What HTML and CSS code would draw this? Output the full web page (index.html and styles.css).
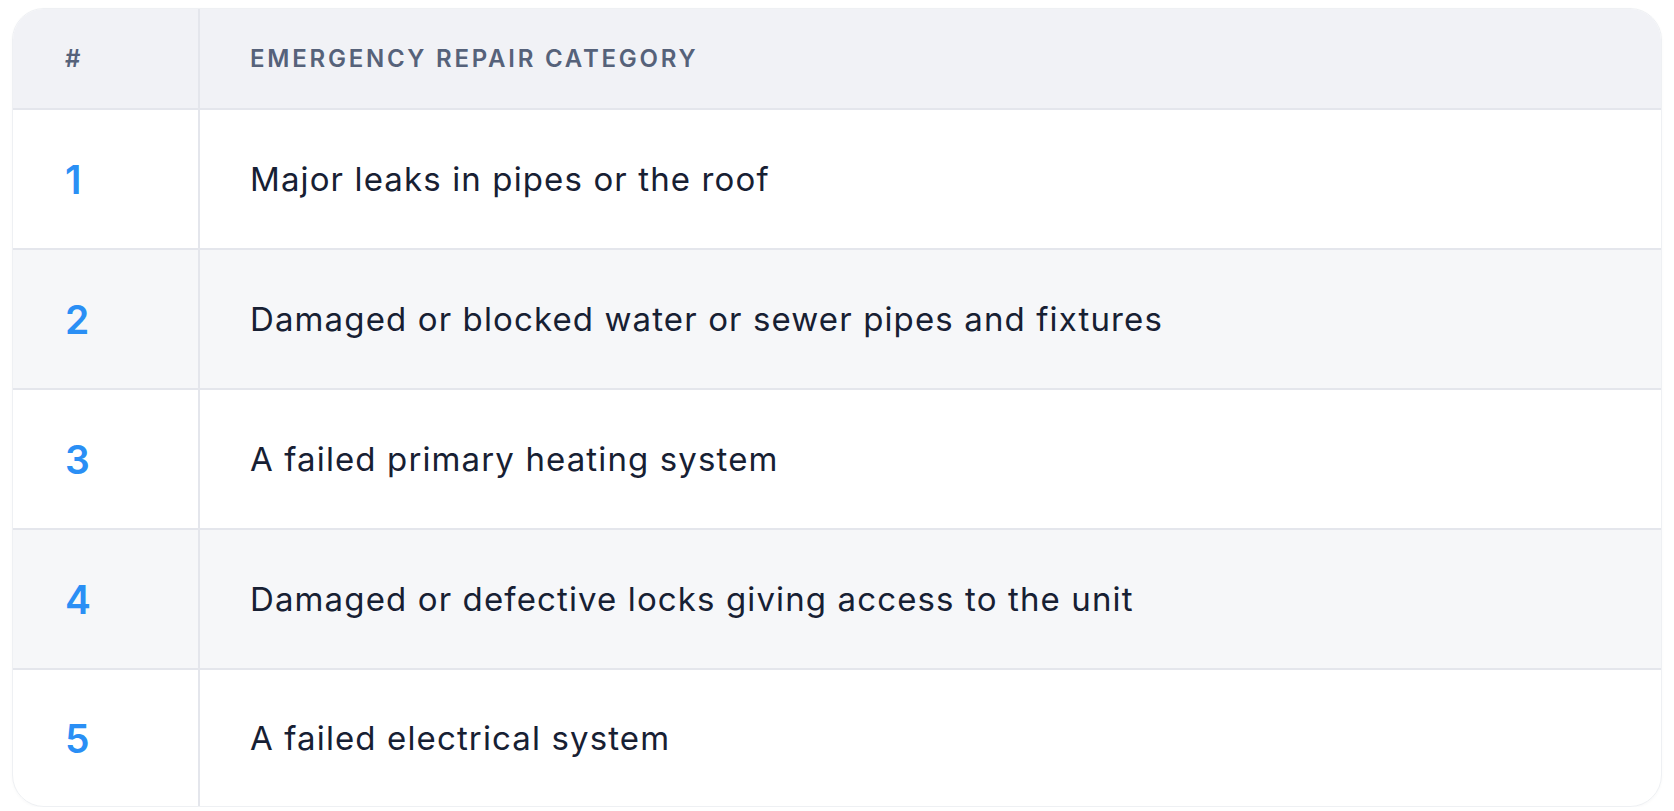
FILE: index.html
```html
<!DOCTYPE html>
<html lang="en">
<head>
  <meta charset="UTF-8">
  <title>Emergency Repairs</title>
  <link rel="stylesheet" href="styles.css">
</head>
<body>
  <div class="table-card">
    <table class="repair-table">
      <thead>
        <tr>
          <th class="col-num">#</th>
          <th>Emergency Repair Category</th>
        </tr>
      </thead>
      <tbody>
        <tr>
          <td class="col-num">1</td>
          <td>Major leaks in pipes or the roof</td>
        </tr>
        <tr>
          <td class="col-num">2</td>
          <td>Damaged or blocked water or sewer pipes and fixtures</td>
        </tr>
        <tr>
          <td class="col-num">3</td>
          <td>A failed primary heating system</td>
        </tr>
        <tr>
          <td class="col-num">4</td>
          <td>Damaged or defective locks giving access to the unit</td>
        </tr>
        <tr>
          <td class="col-num">5</td>
          <td>A failed electrical system</td>
        </tr>
      </tbody>
    </table>
  </div>
</body>
</html>
```

FILE: styles.css
```css
* { margin: 0; padding: 0; box-sizing: border-box; }
body {
  font-family: Inter, "Noto Sans", sans-serif;
  background: #fff;
  padding: 8px 12px 0;
}
.table-card {
  border: 1px solid #eef0f3;
  border-radius: 32px;
  overflow: hidden;
  box-shadow: 0 1px 3px rgba(20, 30, 50, 0.03);
}
.repair-table {
  width: 100%;
  border-collapse: collapse;
}
.repair-table th {
  height: 100px;
  background: #f1f2f6;
  color: #56627a;
  font-size: 24px;
  font-weight: 600;
  letter-spacing: 0.115em;
  text-transform: uppercase;
  text-align: left;
  padding: 0 50px;
  border-bottom: 2px solid #e4e6ec;
}
.repair-table td {
  height: 140px;
  padding: 0 50px;
  font-size: 33px;
  letter-spacing: 0.034em;
  color: #172033;
  border-bottom: 2px solid #e4e6ec;
}
.repair-table tbody tr:nth-child(even) td { background: #f6f7f9; }
.repair-table tbody tr:last-child td { border-bottom: none; height: 137px; }
.repair-table .col-num {
  width: 186px;
  padding-left: 52px;
  border-right: 2px solid #e4e6ec;
}
.repair-table td.col-num {
  color: #2a8ff5;
  font-size: 39px;
  font-weight: 600;
  letter-spacing: 0;
}
```
